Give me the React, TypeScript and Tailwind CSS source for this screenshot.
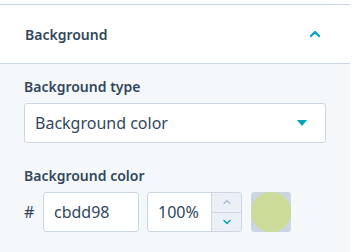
import { ChevronUp, ChevronDown } from "lucide-react";

export default function App() {
  return (
    <div className="w-[355px] h-[252px] bg-white overflow-hidden text-[#33475b] font-['Noto_Sans',sans-serif]">
      <div className="w-[350px]">
        <div className="h-[4px]" />
        {/* Section header */}
        <div className="flex items-center justify-between h-[60px] border-y border-[#cbd6e2] pl-[25px] pr-[27px]">
          <span className="text-[14px] font-semibold">Background</span>
          <ChevronUp size={16} strokeWidth={3.5} className="text-[#00a4bd]" />
        </div>

        {/* Body */}
        <div className="bg-[#f5f8fa] h-[188px] px-[24px] pt-[13px]">
          <div className="text-[14px] font-semibold leading-[20px]">Background type</div>
          <div className="mt-[6px] w-[302px] h-[40px] bg-white border border-[#cbd6e2] rounded-[3px] flex items-center justify-between pl-[10px] pr-[18px]">
            <span className="text-[16px]">Background color</span>
            <svg width="10" height="6" viewBox="0 0 10 6">
              <path d="M0 0h10L5 6z" fill="#00a4bd" />
            </svg>
          </div>

          <div className="mt-[23px] text-[14px] font-semibold leading-[20px]">Background color</div>
          <div className="mt-[6px] flex items-center">
            <span className="w-[19px] text-[16px]">#</span>
            <div className="w-[96px] h-[40px] bg-white border border-[#cbd6e2] rounded-[3px] flex items-center pl-[10px] text-[16px]">
              cbdd98
            </div>
            <div className="ml-[8px] w-[95px] h-[40px] bg-white border border-[#cbd6e2] rounded-[3px] flex overflow-hidden">
              <div className="flex-1 flex items-center pl-[10px] text-[16px]">100%</div>
              <div className="w-[30px] border-l border-[#cbd6e2] bg-[#eaf0f6] flex flex-col">
                <div className="flex-1 flex items-center justify-center border-b border-[#cbd6e2]">
                  <ChevronUp size={12} strokeWidth={3} className="text-[#b0c1d4]" />
                </div>
                <div className="flex-1 flex items-center justify-center">
                  <ChevronDown size={12} strokeWidth={3} className="text-[#00a4bd]" />
                </div>
              </div>
            </div>
            <div className="relative ml-[9px] w-[40px] h-[40px] rounded-[3px] bg-[#cbd6e2]">
              <div className="absolute inset-0 rounded-full bg-[#cbdd98]" />
            </div>
          </div>
        </div>
      </div>
    </div>
  );
}
